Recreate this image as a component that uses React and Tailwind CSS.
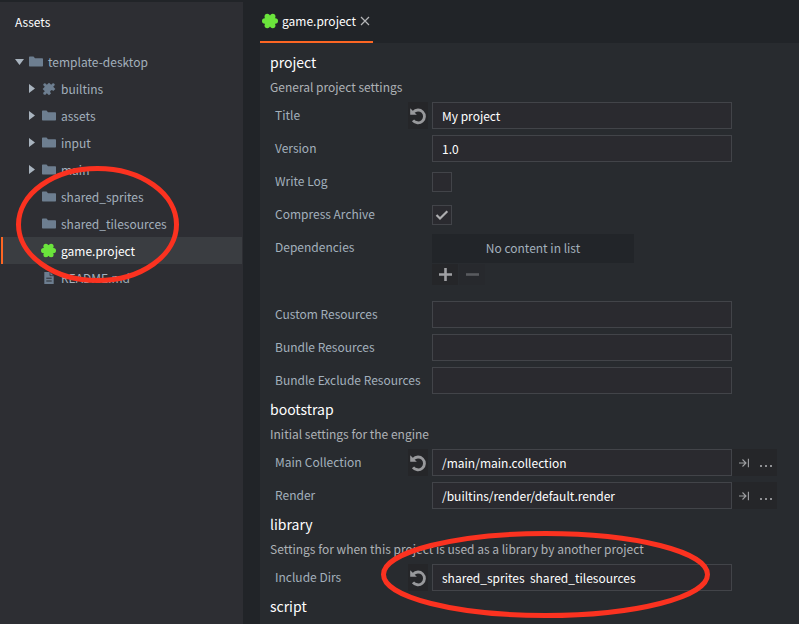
import React from "react";

const PUZZLE =
  "M20.5 11H19V7c0-1.1-.9-2-2-2h-4V3.500a2.500 2.500 0 0 0-5 0V5H4c-1.100 0-2 .9-2 2v3.800h1.500a2.700 2.700 0 0 1 0 5.400H2V20c0 1.100.9 2 2 2h3.800v-1.500a2.700 2.700 0 0 1 5.400 0V22H17c1.100 0 2-.9 2-2v-4h1.500a2.500 2.500 0 0 0 0-5z";

function Folder() {
  return (
    <svg width="14" height="12" viewBox="0 0 14 12" className="mt-px">
      <path d="M0 1.2Q0 .5.7.5H4.500L6 2.200H13.300Q14 2.200 14 3V9.800Q14 10.500 13.300 10.500H.7Q0 10.500 0 9.800Z" fill="#6d7e90" />
    </svg>
  );
}

function Puzzle() {
  return (
    <svg width="14" height="14" viewBox="0 0 14 14">
      <g fill="#6d7e90" transform="rotate(-45 7 7)">
        <path d="M2.500 2.500H5.600V1.400Q5.200.4 6 -.2Q7-.7 8-.2Q8.800.4 8.400 1.400V2.500H11.500V5.600H12.600Q13.600 5.200 14.200 6Q14.700 7 14.200 8Q13.600 8.800 12.600 8.400H11.500V11.500H8.500V10.600Q8.900 9.500 7 9.300Q5.100 9.500 5.500 10.600V11.500H2.500V8.400H1.400Q.4 8.800-.2 8Q-.7 7-.2 6Q.4 5.200 1.400 5.600H2.500Z" />
      </g>
    </svg>
  );
}

function Blob({ size }) {
  return (
    <svg width={size} height={size} viewBox="0 0 15 15">
      <g fill="#6be43c">
        <circle cx="4.900" cy="3.200" r="2.500" />
        <circle cx="10.100" cy="3.200" r="2.500" />
        <circle cx="2.600" cy="7.500" r="2.600" />
        <circle cx="12.400" cy="7.500" r="2.600" />
        <circle cx="4.900" cy="11.800" r="2.500" />
        <circle cx="10.100" cy="11.800" r="2.500" />
        <circle cx="7.500" cy="7.500" r="5.400" />
      </g>
    </svg>
  );
}

function Doc() {
  return (
    <svg width="14" height="14" viewBox="0 0 14 14">
      <path d="M2.300 1H8L11.700 4.700V13H2.300Z" fill="#6d7e90" />
      <path d="M8 1V4.700H11.700" fill="none" stroke="#2d2e33" strokeWidth=".8" />
      <path d="M4.300 7.200H9.700M4.300 10H9.700" stroke="#2d2e33" strokeWidth="1" />
    </svg>
  );
}

function Arrow({ open }) {
  return open ? (
    <svg width="9" height="8" viewBox="0 0 9 8">
      <path d="M0 1H9L4.500 7Z" fill="#a9b4bf" />
    </svg>
  ) : (
    <svg width="9" height="9" viewBox="0 0 9 9">
      <path d="M1 0L7 4.500L1 9Z" fill="#a9b4bf" />
    </svg>
  );
}

const TREE = [
  { name: "builtins", icon: <Puzzle />, arrow: true },
  { name: "assets", icon: <Folder />, arrow: true },
  { name: "input", icon: <Folder />, arrow: true },
  { name: "main", icon: <Folder />, arrow: true },
  { name: "shared_sprites", icon: <Folder /> },
  { name: "shared_tilesources", icon: <Folder /> },
  { name: "game.project", icon: <Blob size={15} />, selected: true },
  { name: "README.md", icon: <Doc /> },
];

function TreeRow({ name, icon, arrow, selected }) {
  return (
    <div
      className={
        "ml-px mr-px flex h-[27px] items-center border-l-2 pl-[25px] " +
        (selected ? "border-[#fd6623] bg-[#3a3d41] text-white" : "border-transparent")
      }
    >
      <span className="flex w-[13px] items-center">{arrow && <Arrow />}</span>
      <span className="flex w-[15px] items-center justify-center">{icon}</span>
      <span className="ml-[5px]">{name}</span>
    </div>
  );
}

function Reset() {
  return (
    <div className="flex h-[27px] w-5 items-center justify-center bg-[#252629]">
      <svg width="18" height="18" viewBox="0 0 18 18">
        <path d="M4.300 5.100A6.400 6.400 0 1 1 4 13.300" fill="none" stroke="#98999c" strokeWidth="2.800" />
        <path d="M1.200 1.300V7.700H7.800Z" fill="#98999c" />
      </svg>
    </div>
  );
}

function Row({ label, reset, tall, children }) {
  return (
    <div className={"flex pl-[5px] " + (tall ? "h-[61px]" : "h-[27px]")}>
      <div className="h-[27px] w-[133px] whitespace-nowrap leading-[25px] text-[#a3b0bc]">{label}</div>
      <div className="mr-1 w-5">{reset && <Reset />}</div>
      {children}
    </div>
  );
}

function Field({ value }) {
  return (
    <div className="h-[27px] w-[300px] whitespace-pre border border-[#424449] bg-[#2a2a2f] pl-[9px] leading-[25px] text-white">
      {value}
    </div>
  );
}

function Check({ on }) {
  return (
    <div className="mt-1 flex size-5 items-center justify-center border border-[#424449] bg-[#2a2a2f]">
      {on && (
        <svg width="14" height="12" viewBox="0 0 14 12">
          <path d="M1.500 6L5 9.500L12.300 2.300" fill="none" stroke="#adaeb0" strokeWidth="2.200" />
        </svg>
      )}
    </div>
  );
}

function Browse() {
  return (
    <div className="flex h-[27px] w-[45px] items-center bg-[#252629] pl-[7px] text-[#a0a1a4]">
      <svg width="10" height="10" viewBox="0 0 10 10">
        <path d="M0 5H7M3.500 1.500L7 5L3.500 8.500M9.400 .8V9.200" fill="none" stroke="#a0a1a4" strokeWidth="1.100" />
      </svg>
      <svg width="12" height="3" viewBox="0 0 12 3" className="ml-[11px] mt-[5px]">
        <path d="M0 1H2V3H0ZM5 1H7V3H5ZM10 1H12V3H10Z" fill="#8f9093" />
      </svg>
    </div>
  );
}

function Section({ title, desc, children }) {
  return (
    <section>
      <h2 className="mt-[3px] h-[26px] text-[14px] leading-[25px] text-white">{title}</h2>
      <p className="mb-[3px] h-[23px] whitespace-nowrap leading-[22px] text-[#aeb2b6]">{desc}</p>
      <div className="flex flex-col gap-1.5">{children}</div>
    </section>
  );
}

export default function App() {
  return (
    <div className="relative flex h-[624px] w-[799px] overflow-hidden bg-[#212428] font-['Noto_Sans_CJK_SC',sans-serif] text-[12px] text-[#a3b0bc]">
      <aside className="mt-0.5 w-[243px] bg-[#2d2e33]">
        <div className="h-[46px] pl-[15px] leading-[40px] text-white">Assets</div>
        <div className="flex h-[27px] items-center pl-[15px]">
          <Arrow open />
          <span className="ml-[5px] flex w-[14px]"><Folder /></span>
          <span className="ml-[5px]">template-desktop</span>
        </div>
        {TREE.map((r) => (
          <TreeRow key={r.name} {...r} />
        ))}
      </aside>

      <main className="ml-[17px] flex flex-1 flex-col">
        <div className="flex h-[43px] w-[113px] items-center border-b-2 border-[#fd6623] pl-[2px] text-white">
          <Blob size={16} />
          <span className="ml-1 w-[73px] whitespace-nowrap">game.project</span>
          <svg width="10" height="10" viewBox="0 0 10 10" className="ml-[5px]">
            <path d="M1 1L9 9M9 1L1 9" stroke="#b5b6b8" strokeWidth="1.200" />
          </svg>
        </div>
        <div className="flex-1 bg-[#282b2f] pl-2.5 pt-1">
          <Section title="project" desc="General project settings">
            <Row label="Title" reset><Field value="My project" /></Row>
            <Row label="Version"><Field value="1.0" /></Row>
            <Row label="Write Log"><Check /></Row>
            <Row label="Compress Archive"><Check on /></Row>
            <Row label="Dependencies" tall>
              <div>
                <div className="h-[29px] w-[202px] bg-[#222529] text-center leading-[28px]">No content in list</div>
                <div className="mt-px flex gap-px">
                  <div className="flex h-[21px] w-[26px] items-center justify-center bg-[#252629]">
                    <svg width="13" height="13" viewBox="0 0 13 13">
                      <path d="M0 6.500H13M6.500 0V13" stroke="#a0a1a4" strokeWidth="2.600" />
                    </svg>
                  </div>
                  <div className="flex h-[21px] w-[26px] items-center justify-center bg-[#27292d]">
                    <svg width="13" height="13" viewBox="0 0 13 13">
                      <path d="M0 6.500H13" stroke="#595b5f" strokeWidth="2.600" />
                    </svg>
                  </div>
                </div>
              </div>
            </Row>
            <Row label="Custom Resources"><Field /></Row>
            <Row label="Bundle Resources"><Field /></Row>
            <Row label="Bundle Exclude Resources"><Field /></Row>
          </Section>
          <Section title="bootstrap" desc="Initial settings for the engine">
            <Row label="Main Collection" reset><Field value="/main/main.collection" /><Browse /></Row>
            <Row label="Render"><Field value="/builtins/render/default.render" /><Browse /></Row>
          </Section>
          <Section title="library" desc="Settings for when this project is used as a library by another project">
            <Row label="Include Dirs" reset><Field value="shared_sprites  shared_tilesources" /></Row>
          </Section>
          <h2 className="mt-[3px] text-[14px] leading-[25px] text-white">script</h2>
        </div>
      </main>

      <svg className="absolute left-0 top-0" width="799" height="624" viewBox="0 0 799 624">
        <ellipse cx="97.500" cy="224.500" rx="79" ry="56" fill="none" stroke="#fb3220" strokeWidth="5" />
        <ellipse cx="545.500" cy="574.500" rx="162" ry="41" fill="none" stroke="#fb3220" strokeWidth="5" />
      </svg>
    </div>
  );
}
